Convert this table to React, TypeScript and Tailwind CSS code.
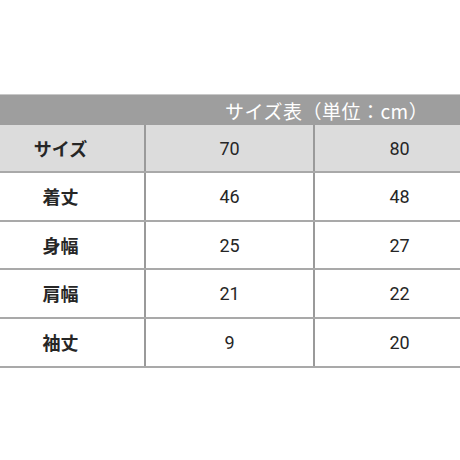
const rows = [
  { label: "着丈", a: "46", b: "48", h: "h-[49px]" },
  { label: "身幅", a: "25", b: "27", h: "h-[48px]" },
  { label: "肩幅", a: "21", b: "22", h: "h-[49px]" },
  { label: "袖丈", a: "9", b: "20", h: "h-[49px]" },
];

function Row({
  label,
  a,
  b,
  h,
  bg = "bg-white",
}: {
  label: string;
  a: string;
  b: string;
  h: string;
  bg?: string;
}) {
  return (
    <div className={`grid grid-cols-[169px_169px_169px] ${h} ${bg} border-b-2 border-[#a9a9a9] text-[#262626]`}>
      <div className="flex items-center justify-center border-r-2 border-[#9a9a9a] font-bold text-[18px]">
        {label}
      </div>
      <div className="flex items-center justify-center border-r-2 border-[#9a9a9a] text-[18px] font-[Roboto,sans-serif]">
        {a}
      </div>
      <div className="flex items-center justify-center text-[18px] font-[Roboto,sans-serif]">{b}</div>
    </div>
  );
}

export default function App() {
  return (
    <div
      className="w-[460px] h-[460px] overflow-hidden bg-white"
      style={{ fontFamily: '"Noto Sans CJK JP", "Noto Sans", sans-serif' }}
    >
      <div className="ml-[-23px] mt-[94px] w-[507px]">
        <div className="flex h-[31px] items-center bg-[#9e9e9e] border-t border-[#c8c8c8] pl-[248px] text-[19px] leading-none tracking-[0.5px] text-white">
          サイズ表（単位：cm）
        </div>
        <Row label="サイズ" a="70" b="80" h="h-[48px]" bg="bg-[#dcdcdc]" />
        {rows.map((r) => (
          <Row key={r.label} {...r} />
        ))}
      </div>
    </div>
  );
}
